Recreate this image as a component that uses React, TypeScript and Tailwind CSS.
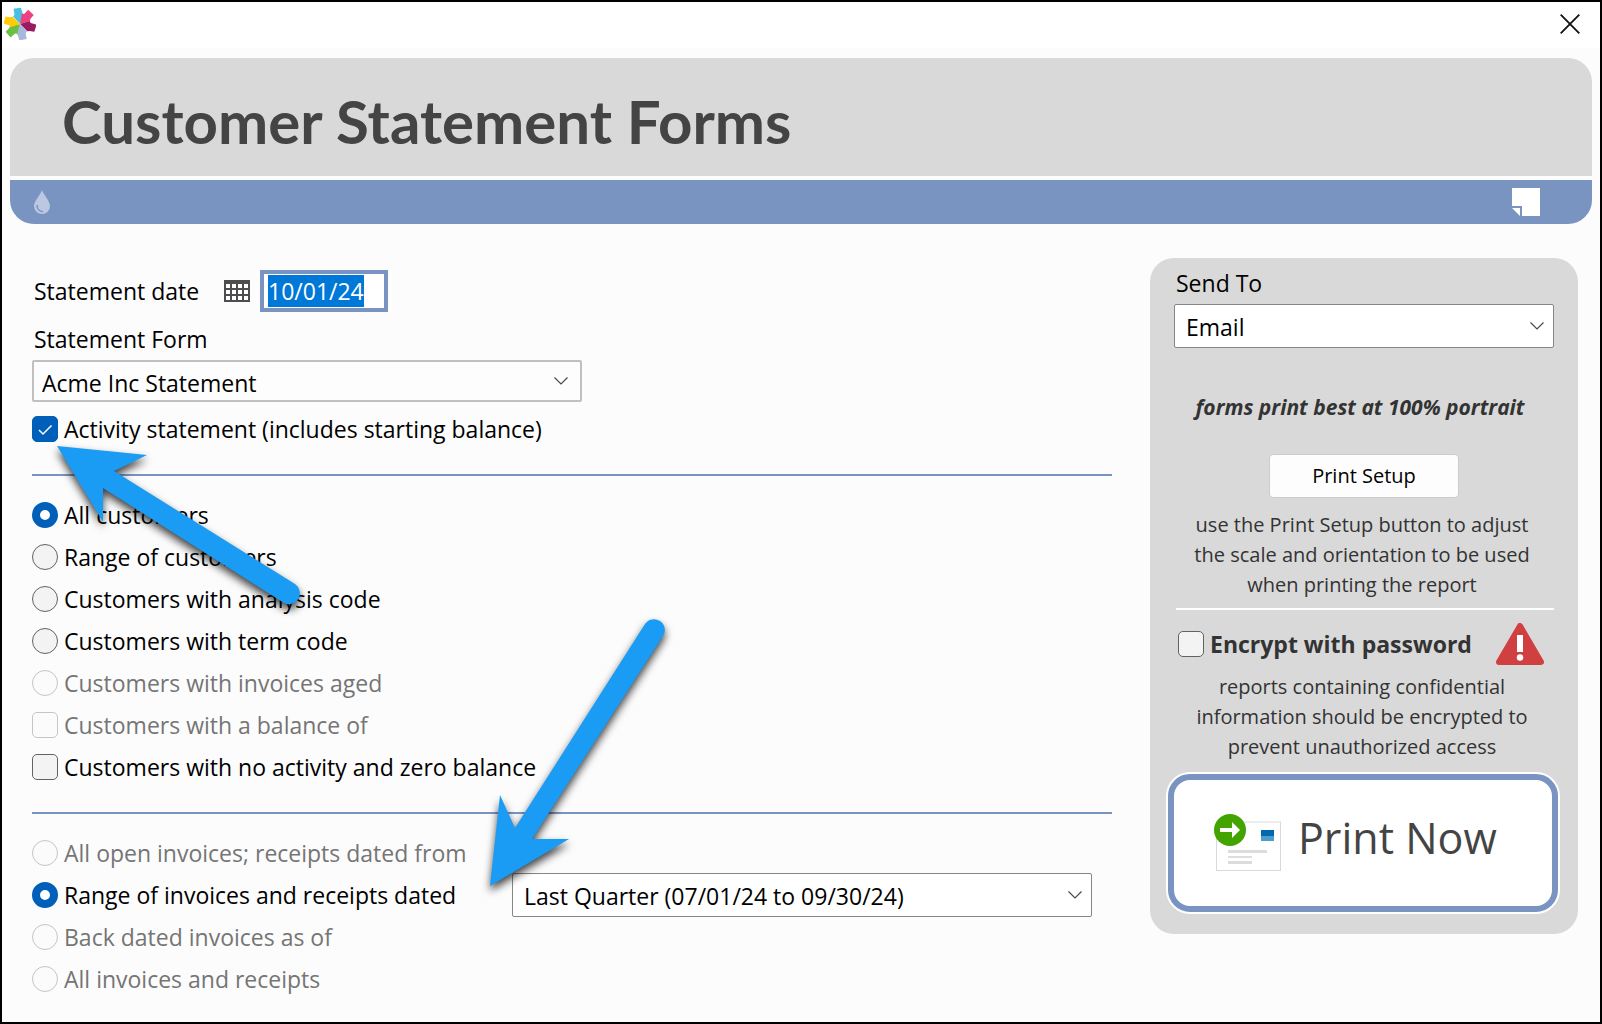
import React, { useEffect, useRef, useState } from "react";

type Option = {
  id: string;
  label: string;
  type: "radio" | "checkbox";
  disabled?: boolean;
};

const customerOptions: Option[] = [
  { id: "all", label: "All customers", type: "radio" },
  { id: "range", label: "Range of customers", type: "radio" },
  { id: "analysis", label: "Customers with analysis code", type: "radio" },
  { id: "term", label: "Customers with term code", type: "radio" },
  { id: "aged", label: "Customers with invoices aged", type: "radio", disabled: true },
  { id: "balance", label: "Customers with a balance of", type: "checkbox", disabled: true },
  { id: "noactivity", label: "Customers with no activity and zero balance", type: "checkbox" },
];

const invoiceOptions: Option[] = [
  { id: "open", label: "All open invoices; receipts dated from", type: "radio", disabled: true },
  { id: "dated", label: "Range of invoices and receipts dated", type: "radio" },
  { id: "backdated", label: "Back dated invoices as of", type: "radio", disabled: true },
  { id: "allinvoices", label: "All invoices and receipts", type: "radio", disabled: true },
];

const petals = [
  { angle: -9, color: "#4bbfe3" },
  { angle: 44, color: "#ef4180" },
  { angle: 106, color: "#9b1b63" },
  { angle: 170, color: "#a8b8dc" },
  { angle: 229, color: "#6cbe45" },
  { angle: 285, color: "#ffcb05" },
];

function Logo() {
  return (
    <svg width="32" height="32" viewBox="-16 -16 32 32" aria-hidden="true">
      {petals.map((p) => (
        <path
          key={p.color}
          d="M0 0L-5.600 -8.500L-4 -10L-4 -16L3.600 -16L4 -11L5 -9Z"
          fill={p.color}
          transform={`rotate(${p.angle})`}
        />
      ))}
    </svg>
  );
}

function CalendarIcon() {
  return (
    <svg width="26" height="22" viewBox="0 0 26 22" aria-hidden="true">
      <rect width="26" height="22" fill="#4d4d4f" />
      {[4, 10, 16].map((y) =>
        [2, 8, 14, 20].map((x) => <rect key={`${x}-${y}`} x={x} y={y} width="4" height="4" fill="#fff" />)
      )}
    </svg>
  );
}

function MailIcon() {
  return (
    <svg width="68" height="58" viewBox="0 0 68 58" aria-hidden="true">
      <rect x="2.5" y="8" width="64" height="48.5" fill="#fff" stroke="#d9d9d9" />
      <rect x="47" y="16" width="13" height="6" fill="#0067b0" />
      <rect x="47" y="22" width="13" height="5" fill="#4a9ecb" />
      <rect x="14" y="36" width="39" height="3" fill="#dcdcdc" />
      <rect x="14" y="42" width="24" height="2" fill="#dcdcdc" />
      <rect x="14" y="47" width="24" height="3" fill="#dcdcdc" />
      <circle cx="16" cy="16" r="16" fill="#43a400" />
      <path d="M6 14H18V8L26 16L18 24V18H6Z" fill="#fff" />
    </svg>
  );
}

function WarningIcon() {
  return (
    <svg width="48" height="42" viewBox="0 0 48 42" aria-hidden="true">
      <path d="M24 3L45 39H3Z" fill="#d04040" stroke="#d04040" strokeWidth="6" strokeLinejoin="round" />
      <rect x="21" y="12" width="6" height="17" fill="#fff" />
      <circle cx="24" cy="34.500" r="3.200" fill="#fff" />
    </svg>
  );
}

const boxBase = "size-[26px] shrink-0 appearance-none border bg-[#f3f3f3] border-[#626262] disabled:border-[#c5c5c5] disabled:bg-[#fbfbfb]";

function OptionRow({ option, group, checked, onChange, bold }: {
  option: Option;
  group: string;
  checked: boolean;
  onChange: (id: string) => void;
  bold?: boolean;
}) {
  return (
    <div className="flex h-[42px] items-center">
      <span className="relative flex">
        <input
          id={option.id}
          type={option.type}
          name={group}
          checked={checked}
          disabled={option.disabled}
          onChange={() => onChange(option.id)}
          className={
            option.type === "radio"
              ? `${boxBase} rounded-full checked:border-8 checked:border-[#005fb8] checked:bg-white`
              : `${boxBase} rounded-[5px] checked:border-[#005fb8] checked:bg-[#005fb8]`
          }
        />
        {option.type === "checkbox" && checked && (
          <svg className="pointer-events-none absolute inset-0" width="26" height="26" viewBox="0 0 26 26" fill="none" aria-hidden="true">
            <path d="M7 14L11 18L19.500 9.500" stroke="#fff" strokeWidth="1.500" />
          </svg>
        )}
      </span>
      <label
        htmlFor={option.id}
        className={`pl-1.5 whitespace-nowrap ${bold ? "font-bold text-[#333333]" : option.disabled ? "text-[#757575]" : "text-black"}`}
      >
        {option.label}
      </label>
    </div>
  );
}

function SelectBox({ id, label, value, wide }: { id: string; label?: string; value: string; wide?: boolean }) {
  return (
    <div className="relative">
      <select
        id={id}
        aria-label={label}
        className={
          wide
            ? "block h-[42px] w-full appearance-none rounded-xs border-2 border-[#c0c0c0] bg-[#fdfdfd] pt-1 pl-2 text-black"
            : "block h-11 w-full appearance-none rounded-xs border border-[#868686] bg-white pt-0.5 pl-[11px] text-black"
        }
      >
        <option>{value}</option>
      </select>
      <svg
        className={`pointer-events-none absolute top-1/2 -translate-y-1/2 ${wide ? "right-3.5" : "right-2.5"}`}
        width="14"
        height="8"
        viewBox="0 0 14 8"
        fill="none"
        aria-hidden="true"
      >
        <path d="M0.500 0.500L7 7L13.500 0.500" stroke="#4a4a4a" strokeWidth="1.200" />
      </svg>
    </div>
  );
}

// callout arrows that lie over the form
function Arrows() {
  return (
    <svg
      className="pointer-events-none absolute top-0 left-0 drop-shadow-[0px_5px_4px_rgba(0,0,0,0.75)]"
      width="700"
      height="920"
      viewBox="2 2 700 920"
      fill="#1a9bf4"
      aria-hidden="true"
    >
      <path d="M57 446L147 455L114 471L295 584A11 11 0 0 1 284 603L103 488V522Z" />
      <path d="M490 886L500 795L515 828L645 624A10.500 10.500 0 0 1 663 636L532 839H569Z" />
    </svg>
  );
}

export default function App() {
  const [activity, setActivity] = useState(true);
  const [customers, setCustomers] = useState("all");
  const [noActivity, setNoActivity] = useState(false);
  const [invoices, setInvoices] = useState("dated");
  const [encrypt, setEncrypt] = useState(false);
  const [date, setDate] = useState("10/01/24");
  const dateRef = useRef<HTMLInputElement>(null);

  useEffect(() => {
    dateRef.current?.focus();
    dateRef.current?.select();
  }, []);

  return (
    <div className="relative flex min-h-screen flex-col border-2 border-black bg-[#fcfcfc] font-['Open_Sans','Noto_Sans',sans-serif] text-[23px] leading-[30px] text-black">
      <div className="flex h-[46px] items-center justify-between bg-white pr-5 pb-0.5 pl-0.5">
        <Logo />
        <button type="button" aria-label="Close">
          <svg width="20" height="20" viewBox="0 0 20 20" fill="none" aria-hidden="true">
            <path d="M0.700 0.700L19.300 19.300M19.300 0.700L0.700 19.300" stroke="#111" strokeWidth="1.800" />
          </svg>
        </button>
      </div>

      <header className="mx-2 mt-2.5 flex flex-col gap-1">
        <div className="flex h-[118px] items-center rounded-t-3xl bg-[#d9d9d9] pt-2.5 pb-0.5 pl-[52px]">
          <h1 className="font-['Lato','Open_Sans',sans-serif] text-[60px] leading-[64px] font-bold text-[#444444]">Customer Statement Forms</h1>
        </div>
        <div className="flex h-11 items-center justify-between rounded-b-3xl bg-[#7994c1] pr-[52px] pl-6">
          <svg width="16" height="24" viewBox="0 0 16 24" aria-hidden="true">
            <path d="M8 0C9 4 16 11 16 16A8 8 0 0 1 0 16C0 11 7 4 8 0Z" fill="#bcc8e2" />
            <path d="M3 15C3 19 5.500 21.500 9 21.500" stroke="#7994c1" strokeWidth="1.500" fill="none" />
          </svg>
          <button type="button" aria-label="Notes">
            <svg width="28" height="28" viewBox="0 0 28 28" fill="#fff" aria-hidden="true">
              <path d="M0 0H28V28H10V18H0Z" />
              <path d="M0 20H8V28Z" />
            </svg>
          </button>
        </div>
      </header>

      <main className="flex items-start gap-[38px] pt-[34px] pr-[22px] pl-[30px]">
        <form className="min-w-0 flex-1 pt-3">
          <div className="flex h-[42px] items-center">
            <label htmlFor="statement-date" className="w-48 pl-0.5">Statement date</label>
            <button type="button" aria-label="Pick a date" className="mr-2.5">
              <CalendarIcon />
            </button>
            <input
              id="statement-date"
              ref={dateRef}
              value={date}
              onChange={(e) => setDate(e.target.value)}
              className="h-[42px] w-32 border-4 border-[#7994c1] bg-white pl-1 outline-none selection:bg-[#0078d7] selection:text-white"
            />
          </div>
          <label htmlFor="statement-form" className="flex h-12 items-center pt-1.5 pl-0.5">Statement Form</label>
          <div className="mb-1.5 w-[550px]">
            <SelectBox id="statement-form" value="Acme Inc Statement" wide />
          </div>
          <OptionRow
            option={{ id: "activity", label: "Activity statement (includes starting balance)", type: "checkbox" }}
            group="activity"
            checked={activity}
            onChange={() => setActivity(!activity)}
          />

          <hr className="mt-6 mb-[18px] border-t-2 border-[#7994c1]" />

          {customerOptions.map((o) => (
            <OptionRow
              key={o.id}
              option={o}
              group="customers"
              checked={o.type === "radio" ? customers === o.id : o.id === "noactivity" && noActivity}
              onChange={(id) => (o.type === "radio" ? setCustomers(id) : setNoActivity(!noActivity))}
            />
          ))}

          <hr className="mt-6 mb-[18px] border-t-2 border-[#7994c1]" />

          {invoiceOptions.map((o) => (
            <div key={o.id} className="flex h-[42px] items-center">
              <div className="w-[480px]">
                <OptionRow option={o} group="invoices" checked={invoices === o.id} onChange={setInvoices} />
              </div>
              {o.id === "dated" && (
                <div className="w-[580px]">
                  <SelectBox id="period" label="Period" value="Last Quarter (07/01/24 to 09/30/24)" />
                </div>
              )}
            </div>
          ))}
        </form>

        <aside className="w-[428px] shrink-0 rounded-3xl bg-[#d9d9d9] px-6 pb-5">
          <label htmlFor="send-to" className="flex h-[46px] items-center pt-1 pl-0.5">Send To</label>
          <SelectBox id="send-to" value="Email" />
          <p className="mt-11 pr-2 text-center text-[21px] leading-[30px] font-bold text-[#333333] italic">forms print best at 100% portrait</p>
          <button type="button" className="mx-auto mt-8 block h-11 w-[190px] rounded-sm border border-[#cccccc] bg-[#fdfdfd] text-xl">
            Print Setup
          </button>
          <p className="mt-3 pr-5 pl-4 text-center text-xl leading-[30px] text-[#333333]">
            use the Print Setup button to adjust the scale and orientation to be used when printing the report
          </p>
          <hr className="mt-2 ml-0.5 border-t-2 border-white" />
          <div className="mt-2.5 flex h-12 items-center justify-between pr-2.5 pl-1">
            <OptionRow
              option={{ id: "encrypt", label: "Encrypt with password", type: "checkbox" }}
              group="encrypt"
              checked={encrypt}
              onChange={() => setEncrypt(!encrypt)}
              bold
            />
            <WarningIcon />
          </div>
          <p className="mt-1 pr-5 pl-4 text-center text-xl leading-[30px] text-[#333333]">
            reports containing confidential information should be encrypted to prevent unauthorized access
          </p>
          <div className="-mr-1.5 -ml-2 mt-2.5 rounded-3xl bg-white p-0.5">
            <button
              type="button"
              className="flex h-[138px] w-full items-center gap-4 rounded-[22px] border-[6px] border-[#7994c1] bg-white pl-10 text-[43px] leading-[60px] text-[#444444]"
            >
              <MailIcon />
              <span className="pb-2.5">Print Now</span>
            </button>
          </div>
        </aside>
      </main>

      <Arrows />
    </div>
  );
}
